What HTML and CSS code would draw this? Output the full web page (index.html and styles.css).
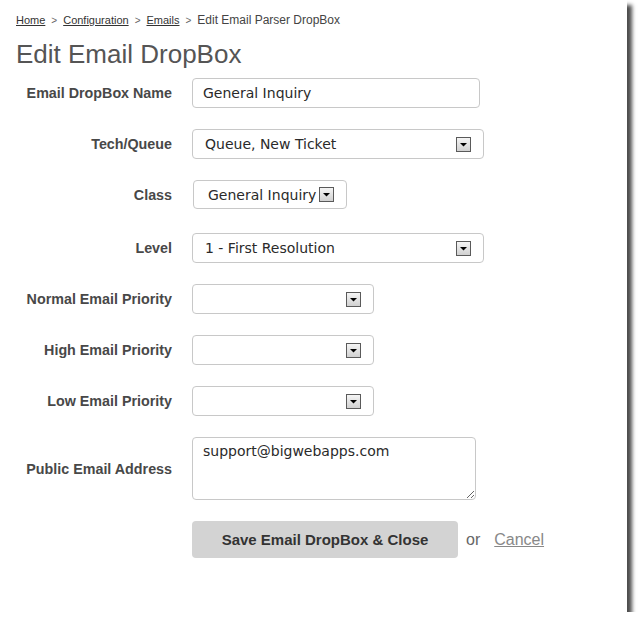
FILE: index.html
```html
<!DOCTYPE html>
<html>
<head>
<meta charset="utf-8">
<link rel="stylesheet" href="styles.css">
</head>
<body>
<div class="panel">
  <div class="crumbs">
    <a href="#">Home</a><span class="sep">&gt;</span><a href="#">Configuration</a><span class="sep">&gt;</span><a href="#">Emails</a><span class="sep">&gt;</span><span class="current">Edit Email Parser DropBox</span>
  </div>
  <h1 class="title">Edit Email DropBox</h1>
  <div class="form">
    <label class="lbl">Email DropBox Name</label>
    <input class="txt" type="text" value="General Inquiry">

    <label class="lbl">Tech/Queue</label>
    <div class="sel sel-wide"><span class="val">Queue, New Ticket</span><svg class="arrow" width="15" height="15" viewBox="0 0 15 15"><defs><linearGradient id="g1" x1="0" y1="0" x2="0" y2="1"><stop offset="0" stop-color="#f6f6f6"/><stop offset="1" stop-color="#cfcfcf"/></linearGradient></defs><rect x="0.5" y="0.5" width="14" height="14" fill="url(#g1)" stroke="#5a5a5a"/><path d="M4 6h7l-3.5 3.5z" fill="#000"/></svg></div>

    <label class="lbl">Class</label>
    <div class="sel sel-class"><span class="val">General Inquiry</span><svg class="arrow" width="15" height="15" viewBox="0 0 15 15"><rect x="0.5" y="0.5" width="14" height="14" fill="url(#g1)" stroke="#5a5a5a"/><path d="M4 6h7l-3.5 3.5z" fill="#000"/></svg></div>

    <label class="lbl lvl">Level</label>
    <div class="sel sel-wide lvl"><span class="val">1 - First Resolution</span><svg class="arrow" width="15" height="15" viewBox="0 0 15 15"><rect x="0.5" y="0.5" width="14" height="14" fill="url(#g1)" stroke="#5a5a5a"/><path d="M4 6h7l-3.5 3.5z" fill="#000"/></svg></div>

    <label class="lbl">Normal Email Priority</label>
    <div class="sel sel-small"><span class="val"></span><svg class="arrow" width="15" height="15" viewBox="0 0 15 15"><rect x="0.5" y="0.5" width="14" height="14" fill="url(#g1)" stroke="#5a5a5a"/><path d="M4 6h7l-3.5 3.5z" fill="#000"/></svg></div>

    <label class="lbl">High Email Priority</label>
    <div class="sel sel-small"><span class="val"></span><svg class="arrow" width="15" height="15" viewBox="0 0 15 15"><rect x="0.5" y="0.5" width="14" height="14" fill="url(#g1)" stroke="#5a5a5a"/><path d="M4 6h7l-3.5 3.5z" fill="#000"/></svg></div>

    <label class="lbl">Low Email Priority</label>
    <div class="sel sel-small"><span class="val"></span><svg class="arrow" width="15" height="15" viewBox="0 0 15 15"><rect x="0.5" y="0.5" width="14" height="14" fill="url(#g1)" stroke="#5a5a5a"/><path d="M4 6h7l-3.5 3.5z" fill="#000"/></svg></div>

    <label class="lbl">Public Email Address</label>
    <textarea class="area">support@bigwebapps.com</textarea>

    <div class="spacer"></div>
    <div class="actions">
      <button class="btn" type="button">Save Email DropBox &amp; Close</button>
      <span class="or">or</span>
      <a class="cancel" href="#">Cancel</a>
    </div>
  </div>
</div>
</body>
</html>
```
FILE: styles.css
```css
html, body {
  margin: 0;
  padding: 0;
  background: #fff;
}

.panel {
  width: 627px;
  height: 612px;
  box-sizing: border-box;
  padding: 12px 16px 0 16px;
  background: #fff;
  box-shadow: 5px 5px 4px rgba(0, 0, 0, 0.7);
  font-family: "Liberation Sans", Arial, sans-serif;
}

.crumbs {
  font-size: 11px;
  line-height: 16px;
  color: #333;
  white-space: nowrap;
}

.crumbs a {
  color: #333;
  text-decoration: underline;
}

.crumbs .sep {
  color: #666;
  font-size: 10px;
  padding: 0 6px;
}

.crumbs .current {
  font-size: 12px;
  color: #444;
}

.title {
  margin: 10px 0 0 0;
  font-size: 26px;
  line-height: 30px;
  font-weight: normal;
  color: #555;
}

.form {
  margin-top: 9px;
  display: grid;
  grid-template-columns: 156px auto;
  column-gap: 20px;
  row-gap: 21px;
  align-items: center;
  justify-items: start;
}

.lbl {
  justify-self: end;
  text-align: right;
  font-size: 14.3px;
  font-weight: bold;
  color: #484848;
  white-space: nowrap;
}

.lvl {
  margin-top: 3px;
}

.txt,
.sel,
.area {
  box-sizing: border-box;
  border: 1px solid #c8c8c8;
  border-radius: 4px;
  background: #fff;
  font-family: "DejaVu Sans", Verdana, sans-serif;
  font-size: 14px;
  color: #2a2a2a;
}

.txt {
  width: 288px;
  height: 30px;
  padding: 0 10px;
  outline: none;
}

.sel {
  height: 30px;
  display: flex;
  align-items: center;
  justify-content: space-between;
  padding: 0 12px 0 12px;
}

.sel .val {
  white-space: nowrap;
}

.sel .arrow {
  display: block;
  flex: none;
}

.sel-wide {
  width: 292px;
}

.sel-class {
  width: 154px;
  height: 29px;
  margin-left: 1px;
  padding: 0 12px 0 14px;
}

.sel-small {
  width: 182px;
}

.area {
  width: 284px;
  height: 63px;
  padding: 5px 10px;
  line-height: 17px;
  resize: both;
  outline: none;
  margin: 0;
}

.spacer {
  height: 1px;
}

.actions {
  display: flex;
  align-items: center;
}

.btn {
  width: 266px;
  height: 37px;
  border: none;
  border-radius: 4px;
  background: #d3d3d3;
  font-family: "Liberation Sans", Arial, sans-serif;
  font-size: 15px;
  font-weight: bold;
  color: #333;
  padding: 0;
}

.or {
  margin-left: 8px;
  font-size: 16px;
  color: #666;
}

.cancel {
  margin-left: 14px;
  font-size: 16px;
  color: #888;
  text-decoration: underline;
}
```
